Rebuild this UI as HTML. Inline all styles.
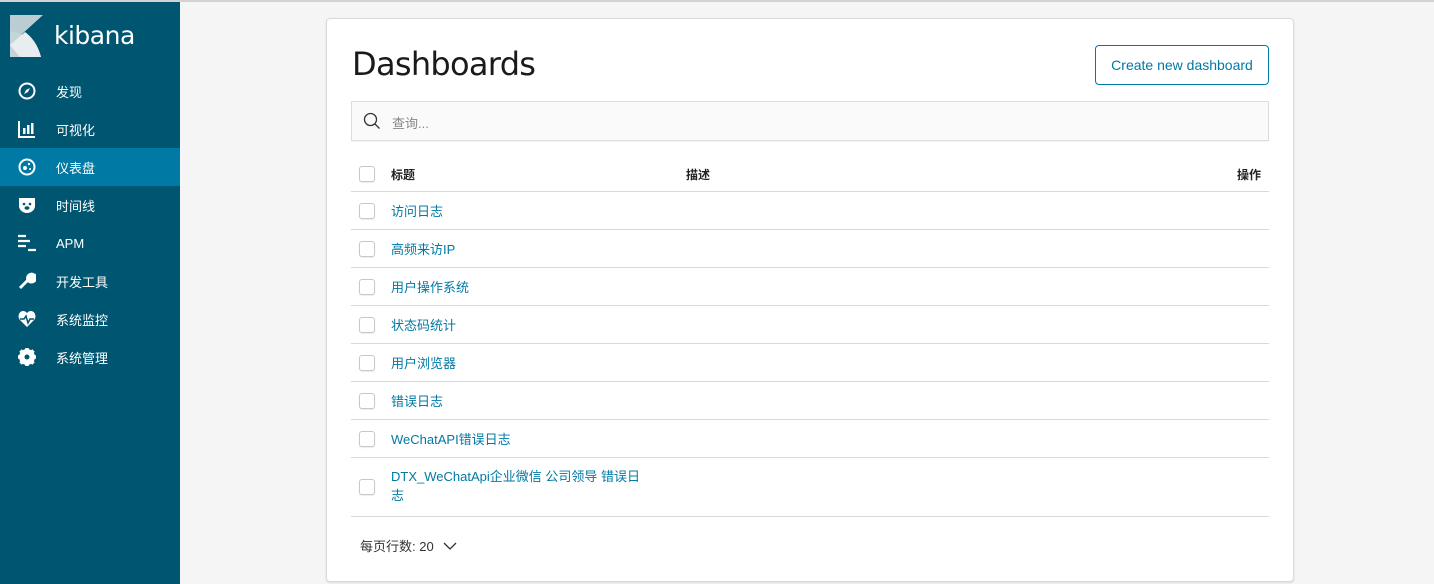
<!DOCTYPE html>
<html><head><meta charset="utf-8"><style>
*{box-sizing:border-box;margin:0;padding:0}
body{width:1434px;height:584px;overflow:hidden;background:#f5f5f5;font-family:"Liberation Sans","Noto Sans CJK SC",sans-serif;position:relative}
.topline{position:absolute;left:0;top:0;width:1434px;height:2px;background:#d3d3d3}
.side{position:absolute;left:0;top:2px;width:180px;height:582px;background:#005571;color:#fff}
.logo{position:absolute;left:10px;top:13px}
.logo span{position:absolute;left:44px;top:6px;font-size:25px;color:#fff;font-family:"DejaVu Sans",sans-serif;letter-spacing:-0.5px}
.nav{position:absolute;top:70px;left:0;width:180px}
.nav div{height:38px;display:flex;align-items:center;font-size:13px;position:relative}
.nav div.act{background:#0079a5}
.nav svg{position:absolute;left:18px}
.nav b{font-weight:normal;position:absolute;left:56px}
.panel{position:absolute;left:326px;top:18px;width:968px;height:564px;background:#fff;border:1px solid #d9d9d9;border-radius:4px;box-shadow:0 1px 2px rgba(0,0,0,.1)}
h1{position:absolute;left:25px;top:26px;font-size:32px;font-weight:normal;color:#1a1a1a;font-family:"DejaVu Sans",sans-serif;letter-spacing:-0.7px}
.btn{position:absolute;left:768px;top:26px;width:174px;height:40px;border:1px solid #0079a5;border-radius:4px;color:#0079a5;font-size:14px;display:flex;align-items:center;justify-content:center}
.search{position:absolute;left:24px;top:82px;width:918px;height:40px;background:#fafafa;border:1px solid #ddd;box-shadow:0 1px 1px rgba(0,0,0,.05)}
.search span{position:absolute;left:40px;top:11px;font-size:13px;color:#888}
.row{position:absolute;left:24px;width:918px;border-bottom:1px solid #d9d9d9;font-size:13px}
.cb{position:absolute;left:8px;width:16px;height:16px;border:1px solid #c8c8c8;border-radius:3px;background:#fff;box-shadow:0 1px 1px rgba(0,0,0,.08)}
.row a{position:absolute;left:40px;color:#0079a5;text-decoration:none}
</style></head><body>
<div class="topline"></div>
<div class="side">
<div class="logo"><svg width="33" height="42" viewBox="0 0 33 42"><path d="M0 0H33L0 30Z" fill="#b9cdd3"/><path d="M0 16C15 18 27 28 31 42H0Z" fill="#c4d5da"/><path d="M0 30L15 17C22 22 28 30 31 42H10Z" fill="#e8eef0"/></svg><span>kibana</span></div>
<div class="nav">
<div><svg width="18" height="18" viewBox="0 0 18 18"><circle cx="9" cy="9" r="7.5" fill="none" stroke="#fff" stroke-width="2"/><path d="M12 6L10 10 6 12 8 8Z" fill="#fff"/></svg><b>发现</b></div>
<div><svg width="18" height="18" viewBox="0 0 18 18"><path d="M1 1V17H17" fill="none" stroke="#fff" stroke-width="2"/><rect x="5" y="8" width="2.5" height="6" fill="#fff"/><rect x="9" y="5" width="2.5" height="9" fill="#fff"/><rect x="13" y="3" width="2.5" height="11" fill="#fff"/></svg><b>可视化</b></div>
<div class="act"><svg width="18" height="18" viewBox="0 0 18 18"><circle cx="9" cy="9" r="7.5" fill="none" stroke="#fff" stroke-width="2"/><circle cx="7" cy="10" r="2" fill="#fff"/><circle cx="11" cy="6" r="1.2" fill="#fff"/><circle cx="12" cy="11" r="1" fill="#fff"/></svg><b>仪表盘</b></div>
<div><svg width="18" height="18" viewBox="0 0 18 18"><path d="M1 2H17V10C17 14 13 17 9 17 5 17 1 14 1 10Z" fill="#fff"/><circle cx="6" cy="8" r="1.3" fill="#005571"/><circle cx="12" cy="8" r="1.3" fill="#005571"/><ellipse cx="9" cy="12" rx="2.5" ry="1.8" fill="#005571"/></svg><b>时间线</b></div>
<div><svg width="18" height="18" viewBox="0 0 18 18"><path d="M0 2H8M0 7H12M0 12H8M10 16H18" stroke="#fff" stroke-width="2.2"/></svg><b>APM</b></div>
<div><svg width="18" height="18" viewBox="0 0 18 18"><path d="M2 16L10 8M10 8A4 4 0 0 1 16 3L13 6 14 7 17 4A4 4 0 0 1 10 8" stroke="#fff" stroke-width="3" fill="#fff"/></svg><b>开发工具</b></div>
<div><svg width="18" height="18" viewBox="0 0 18 18"><path d="M9 17L2 10C-1 7 1 1 5 1 7 1 8 2 9 3 10 2 11 1 13 1 17 1 19 7 16 10Z" fill="#fff"/><path d="M2 9H6L8 6 10 13 12 9H16" fill="none" stroke="#005571" stroke-width="1.5"/></svg><b>系统监控</b></div>
<div><svg width="18" height="18" viewBox="0 0 18 18"><circle cx="9" cy="9" r="6" fill="none" stroke="#fff" stroke-width="4"/><path d="M9 0V18M0 9H18M2.5 2.5L15.5 15.5M15.5 2.5L2.5 15.5" stroke="#fff" stroke-width="3.5"/><circle cx="9" cy="9" r="2.5" fill="#005571"/></svg><b>系统管理</b></div>
</div></div>
<div class="panel">
<h1>Dashboards</h1>
<div class="btn">Create new dashboard</div>
<div class="search"><svg style="position:absolute;left:11px;top:10px" width="18" height="18" viewBox="0 0 18 18"><circle cx="7.5" cy="7.5" r="6" fill="none" stroke="#333" stroke-width="1.3"/><path d="M12 12L16.5 16.5" stroke="#333" stroke-width="1.3"/></svg><span>查询...</span></div>
<div class="row" style="top:135px;height:38px;font-weight:bold;font-size:12px;color:#222"><div class="cb" style="top:12px"></div><span style="position:absolute;left:40px;top:12px">标题</span><span style="position:absolute;left:335px;top:12px">描述</span><span style="position:absolute;right:8px;top:12px">操作</span></div>
<div class="row" style="top:173px;height:38px"><div class="cb" style="top:11px"></div><a style="top:9px">访问日志</a></div>
<div class="row" style="top:211px;height:38px"><div class="cb" style="top:11px"></div><a style="top:9px">高频来访IP</a></div>
<div class="row" style="top:249px;height:38px"><div class="cb" style="top:11px"></div><a style="top:9px">用户操作系统</a></div>
<div class="row" style="top:287px;height:38px"><div class="cb" style="top:11px"></div><a style="top:9px">状态码统计</a></div>
<div class="row" style="top:325px;height:38px"><div class="cb" style="top:11px"></div><a style="top:9px">用户浏览器</a></div>
<div class="row" style="top:363px;height:38px"><div class="cb" style="top:11px"></div><a style="top:9px">错误日志</a></div>
<div class="row" style="top:401px;height:38px"><div class="cb" style="top:11px"></div><a style="top:9px">WeChatAPI错误日志</a></div>
<div class="row" style="top:439px;height:59px"><div class="cb" style="top:21px"></div><a style="top:9px;width:255px;line-height:19px">DTX_WeChatApi企业微信 公司领导 错误日志</a></div>
<div style="position:absolute;left:33px;top:517px;font-size:13px;color:#333">每页行数: 20 <svg width="14" height="10" viewBox="0 0 14 10" style="margin-left:6px"><path d="M1 2L7 8 13 2" fill="none" stroke="#333" stroke-width="1.3"/></svg></div>
</div>
</body></html>
